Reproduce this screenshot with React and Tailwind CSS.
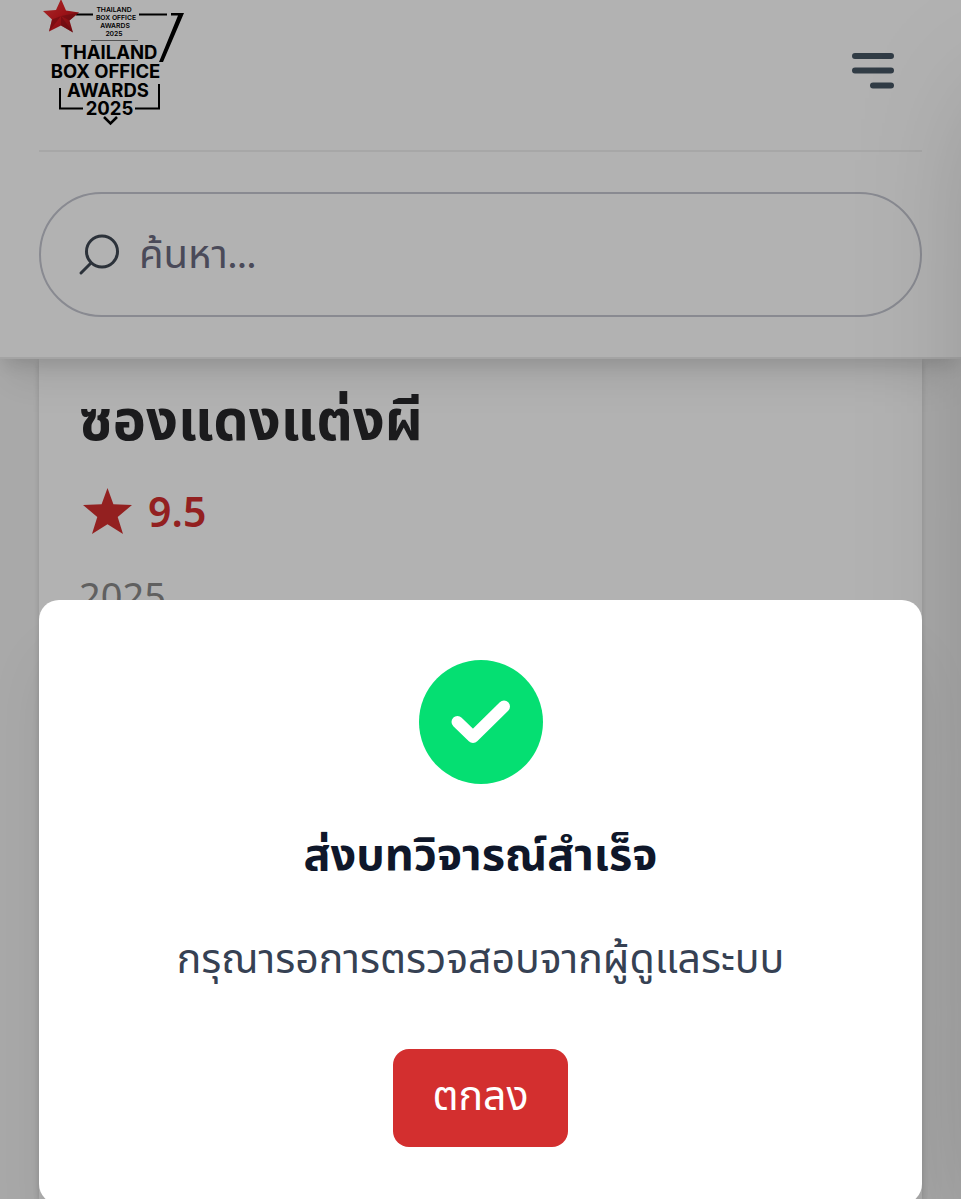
function Logo() {
  return (
    <svg viewBox="-1 0 150 130" className="h-[130px] w-[150px]" role="img" aria-label="Thailand Box Office Awards 2025">
      <defs>
        <linearGradient id="star" x1="0" y1="0" x2="1" y2="1">
          <stop offset="0" stopColor="#f0413f" />
          <stop offset="0.5" stopColor="#e01b22" />
          <stop offset="1" stopColor="#8f1016" />
        </linearGradient>
      </defs>
      <g fill="none" stroke="#000" strokeWidth="2">
        <path d="M36 14.500H53M99 14.500H127" />
        <path d="M20 88V108.500H43M95 108.500H119V84" />
        <path d="M64 117L70.500 123.500L77 117" strokeWidth="2.500" />
        <path d="M51 40.500H98" stroke="#777" strokeWidth="1" />
      </g>
      <path d="M131 13H144L123 62H119L138 15.500H131Z" fill="#000" />
      <path d="M21 -1L26 10.500L39 12.500L29.500 20.500L33 32.500L21 25.500L9 31.500L12 19.500L3 11L16 10Z" fill="url(#star)" />
      <path d="M39 12.500L21 16L29.500 20.500ZM33 32.500L21 16L21 25.500ZM9 31.500L21 16L12 19.500Z" fill="#8f1016" opacity="0.55" />
      <g fontFamily="Inter, sans-serif" textAnchor="middle" fill="#000">
        <g fontSize="6.800" fontWeight="600">
          <text x="74" y="12">THAILAND</text>
          <text x="76" y="20">BOX OFFICE</text>
          <text x="75" y="28">AWARDS</text>
          <text x="74" y="35.500">2025</text>
        </g>
        <g fontSize="18.500" fontWeight="700">
          <text x="69" y="59">THAILAND</text>
          <text x="65.500" y="78">BOX OFFICE</text>
          <text x="68" y="97">AWARDS</text>
          <text x="69.500" y="114.500">2025</text>
        </g>
      </g>
    </svg>
  );
}

function Header() {
  return (
    <header className="relative border-b-2 border-[#ebebeb] bg-white px-[39px] pb-10 shadow-[0_26px_39px_-8px_rgba(0,0,0,0.1),0_10px_16px_-4px_rgba(0,0,0,0.1)]">
      <div className="flex h-[152px] items-start justify-between border-b-2 border-[#f0f0f0]">
        <a href="#home">
          <Logo />
        </a>
        <button type="button" aria-label="เมนู" className="mt-[50px] mr-7">
          <svg viewBox="0 0 42 42" className="size-[42px]" fill="none" stroke="#475664" strokeWidth="6" strokeLinecap="round">
            <path d="M3 6H39M3 20.500H39M21 35.500H39" />
          </svg>
        </button>
      </div>
      <div className="mt-10 flex h-[125px] items-center gap-5 rounded-full border-2 border-[#c4c6d0] px-9">
        <svg viewBox="0 0 42 42" className="size-[42px] shrink-0" fill="none" stroke="#3f4854" strokeWidth="3" strokeLinecap="round" aria-hidden="true">
          <circle cx="25" cy="17.500" r="15.500" />
          <path d="M14 29L4 39" />
        </svg>
        <input
          type="search"
          aria-label="ค้นหา"
          placeholder="ค้นหา..."
          className="h-20 min-w-0 flex-1 bg-transparent pb-1 font-['Lato','Noto_Sans_Thai','Noto_Sans',sans-serif] text-[40px] outline-none placeholder:text-[#6b6b80] placeholder:opacity-100"
        />
      </div>
    </header>
  );
}

function MovieCard() {
  return (
    <main className="px-[39px]">
      <article className="min-h-[840px] bg-white px-10 pt-5 shadow-[0_2px_6px_rgba(0,0,0,0.15)]">
        <h1 className="text-[56px] leading-[88px] font-bold text-[#27272a]">ซองแดงแต่งผี</h1>
        <p className="mt-2 flex h-[72px] items-center gap-4 text-[41px] font-semibold text-[#d32f2f]">
          <svg viewBox="0 0 24 24" className="ml-1 h-[58px] w-[49px]" fill="currentColor" preserveAspectRatio="none" aria-hidden="true">
            <path d="M12 2.500L14.900 9.250L24 9.500L17 14.500L19.600 21.500L12 17.500L4.400 21.500L7 14.500L0 9.500L9.100 9.250Z" />
          </svg>
          <span className="pt-2">9.5</span>
        </p>
        <p className="mt-5 text-[38px] leading-[64px] text-[#8a8a8a]">2025</p>
      </article>
    </main>
  );
}

function Drawer() {
  return (
    <aside
      aria-hidden="true"
      className="absolute top-0 left-full h-full w-80 bg-white shadow-[0_66px_132px_-32px_rgba(0,0,0,0.25)]"
    />
  );
}

function SuccessDialog() {
  return (
    <div className="absolute inset-0 bg-black/30 px-[39px] pt-[600px]">
      <div
        role="dialog"
        aria-modal="true"
        aria-labelledby="dialog-title"
        className="flex flex-col items-center rounded-[20px] bg-white px-10 pt-[60px] pb-[57px] text-center shadow-[0_52px_66px_-13px_rgba(0,0,0,0.1),0_20px_26px_-16px_rgba(0,0,0,0.1)]"
      >
        <svg viewBox="0 0 124 124" className="size-[124px]" aria-hidden="true">
          <circle cx="62" cy="62" r="62" fill="#05df72" />
          <path d="M38.500 62L54 77L85 46.500" fill="none" stroke="#fff" strokeWidth="12" strokeLinecap="round" strokeLinejoin="round" />
        </svg>
        <h2 id="dialog-title" className="mt-10 text-[45px] leading-[64px] font-bold text-[#0f172a]">
          ส่งบทวิจารณ์สำเร็จ
        </h2>
        <p className="mt-10 text-[41px] leading-[64px] text-[#364153]">กรุณารอการตรวจสอบจากผู้ดูแลระบบ</p>
        <button type="button" className="mt-[57px] h-[98px] rounded-2xl bg-[#d32f2f] px-[39px] text-[41px] text-white">
          ตกลง
        </button>
      </div>
    </div>
  );
}

export default function App() {
  return (
    <div className="relative h-screen overflow-hidden bg-[#f3f3f3] font-['Noto_Sans_Thai','Noto_Sans',sans-serif]">
      <Header />
      <MovieCard />
      <Drawer />
      <SuccessDialog />
    </div>
  );
}
